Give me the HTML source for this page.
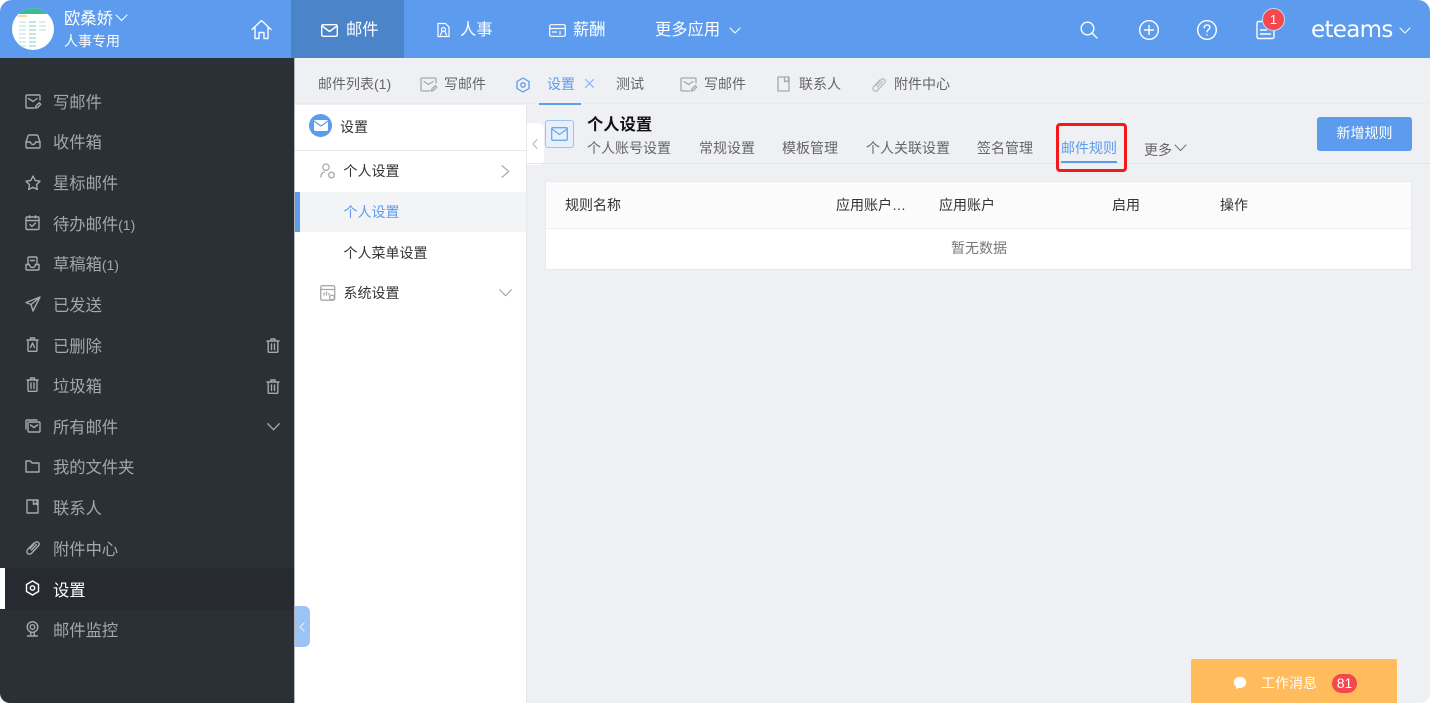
<!DOCTYPE html>
<html lang="zh"><head><meta charset="utf-8"><title>设置</title>
<style>
*{box-sizing:border-box}
html,body{margin:0;padding:0;width:1430px;height:703px;overflow:hidden;background:#fff}
body{position:relative;font-family:"Liberation Sans","Noto Sans CJK SC",sans-serif;font-size:14px;color:#333}
#r{position:absolute;left:0;top:0;width:1430px;height:703px;filter:blur(.3px)}
.a{position:absolute}
.t{position:absolute;white-space:nowrap;line-height:20px;height:20px}
svg{position:absolute;overflow:visible;fill:none;stroke-linecap:round;stroke-linejoin:round}
.side{font-size:16.3px;color:#a3a7ad;left:53px}
.side small{font-size:14px}
.sic{stroke:#a6a9ae;stroke-width:1.4}
.nav{font-size:16.3px;color:#fff}
.w{stroke:#fff;stroke-width:1.4}
.tab{color:#666}
.gi{stroke:#a8a8a8;stroke-width:1.3}
.sub{color:#666}
.th{color:#333}
</style></head><body><div id="r">

<!-- page backgrounds -->
<div class="a" style="left:295px;top:58px;width:1135px;height:645px;background:#eff0f4;border-radius:0 0 10px 0"></div>

<!-- top bar -->
<div class="a" style="left:0;top:0;width:1430px;height:58px;background:#5c9bed;border-radius:12px 12px 0 0"></div>
<div class="a" style="left:291px;top:0;width:113px;height:58px;background:#4c84c9"></div>

<!-- avatar -->
<div class="a" style="left:12px;top:8px;width:42px;height:42px;border-radius:50%;background:#fff;overflow:hidden">
 <div class="a" style="left:0;top:0;width:42px;height:6px;background:#3fbb94"></div>
 <div class="a" style="left:6px;top:7px;width:9px;height:2px;background:#f5d9a0"></div>
 <div class="a" style="left:7px;top:13px;width:7px;height:26px;background:repeating-linear-gradient(#d8f2e9 0 2px,#fff 2px 4px)"></div>
 <div class="a" style="left:17px;top:13px;width:7px;height:26px;background:repeating-linear-gradient(#bfe9da 0 2px,#fff 2px 4px)"></div>
 <div class="a" style="left:27px;top:13px;width:7px;height:12px;background:repeating-linear-gradient(#d8f2e9 0 2px,#fff 2px 4px)"></div>
</div>
<div class="t" style="left:64px;top:9px;font-size:16.3px;color:#fff">欧桑娇</div>
<svg class="w" style="left:115px;top:14px" width="13" height="8" stroke-width="1.1" viewBox="0 0 13 8"><path d="M1 1l5.500 5.500L12 1" stroke-width="1.100"/></svg>
<div class="t" style="left:64px;top:31px;color:#fff">人事专用</div>
<svg class="w" style="left:251px;top:19px" width="21" height="21" viewBox="0 0 21 21"><path d="M1 10.500 10.500 1.500 20 10.500M4 8.500V19.500H8V13.500H13V19.500H17V8.500"/></svg>

<!-- nav -->
<svg class="w" style="left:321px;top:24px" width="17" height="13" viewBox="0 0 17 13"><rect x=".7" y=".7" width="15.600" height="11.600" rx="1.500"/><path d="M1 2l7.500 5.500L16 2"/></svg>
<div class="t nav" style="left:346px;top:20px">邮件</div>
<svg class="w" style="left:437px;top:22px" width="13" height="16" viewBox="0 0 13 16"><path d="M1 1.500h7.500L12 5v9.500H1z" stroke-width="1.200"/><circle cx="6.500" cy="7.500" r="2" stroke-width="1.200"/><path d="M3.500 13l1.500-3.500M9.500 13 8 9.500" stroke-width="1.200"/></svg>
<div class="t nav" style="left:460px;top:20px">人事</div>
<svg class="w" style="left:549px;top:24px" width="17" height="13" viewBox="0 0 17 13"><rect x=".7" y=".7" width="15.600" height="11.600" rx="1.500" stroke-width="1.200"/><path d="M1 4.500h15M3.500 8h4M11 7.500v2.500" stroke-width="1.200"/></svg>
<div class="t nav" style="left:573px;top:20px">薪酬</div>
<div class="t nav" style="left:655px;top:20px">更多应用</div>
<svg class="w" style="left:729px;top:27px" width="12" height="7" viewBox="0 0 12 7"><path d="M1 1l5 5 5-5" stroke-width="1.100"/></svg>

<!-- right icons -->
<svg class="w" style="left:1080px;top:21px" width="18" height="18" viewBox="0 0 18 18"><circle cx="7.500" cy="7.500" r="6.300"/><path d="M12 12l5 5"/></svg>
<svg class="w" style="left:1139px;top:20px" width="20" height="20" viewBox="0 0 20 20"><circle cx="10" cy="10" r="9.300"/><path d="M10 5.500v9M5.500 10h9"/></svg>
<svg class="w" style="left:1197px;top:20px" width="20" height="20" viewBox="0 0 20 20"><circle cx="10" cy="10" r="9.300"/><path d="M7.300 7.800c0-1.800 1.200-2.900 2.800-2.900s2.800 1 2.800 2.500c0 2.200-2.900 2.300-2.900 4.500"/><path d="M10 14.800v.2"/></svg>
<svg class="w" style="left:1256px;top:20px" width="19" height="20" viewBox="0 0 19 20"><path d="M7 1.500H2.500a1.500 1.500 0 0 0-1.500 1.500v14a1.500 1.500 0 0 0 1.500 1.500h14a1.500 1.500 0 0 0 1.500-1.500V9"/><path d="M4.500 10h6M4.500 14h10"/></svg>
<div class="a" style="left:1262px;top:8px;width:23px;height:23px;border-radius:50%;background:#f4474e;border:1px solid #c5d8f2;color:#fff;font-size:13px;line-height:21px;text-align:center">1</div>
<div class="t" style="left:1311px;top:17px;height:26px;line-height:26px;font-size:23px;color:#fff;font-family:'DejaVu Sans','Liberation Sans',sans-serif;letter-spacing:-.7px">eteams</div>
<svg class="w" style="left:1399px;top:27px" width="12" height="7" viewBox="0 0 12 7"><path d="M1 1l5 5 5-5" stroke-width="1.100"/></svg>

<!-- sidebar -->
<div class="a" style="left:0;top:58px;width:295px;height:645px;background:#2b2f36;border-radius:0 0 0 10px;border-right:1px solid #b4b5b8"></div>
<div class="a" style="left:0;top:568px;width:294px;height:42px;background:#272a30"></div>
<div class="a" style="left:0;top:568px;width:5px;height:41px;background:#fff"></div>

<svg class="sic" style="left:25px;top:94px" width="16" height="15" viewBox="0 0 16 15"><path d="M15 6V2a1 1 0 0 0-1-1H2a1 1 0 0 0-1 1v11a1 1 0 0 0 1 1h7"/><path d="M3.500 4.500l4.500 3 4-3M10.500 14l.4-2 3.300-3.300 1.600 1.600-3.300 3.300z"/></svg>
<div class="t side" style="top:93px">写邮件</div>
<svg class="sic" style="left:25px;top:134px" width="16" height="15" viewBox="0 0 16 15"><path d="M1 8 3 2a1.500 1.500 0 0 1 1.500-1h7A1.500 1.500 0 0 1 13 2l2 6v5a1 1 0 0 1-1 1H2a1 1 0 0 1-1-1z"/><path d="M1 8h4.500a2.500 2.500 0 0 0 5 0H15"/></svg>
<div class="t side" style="top:133px">收件箱</div>
<svg class="sic" style="left:25px;top:175px" width="16" height="15" viewBox="0 0 16 15"><path d="M8 1l2.200 4.500 4.800.7-3.500 3.400.8 4.900L8 12.200l-4.300 2.300.8-4.900L1 6.200l4.800-.7z"/></svg>
<div class="t side" style="top:174px">星标邮件</div>
<svg class="sic" style="left:25px;top:215px" width="15" height="15" viewBox="0 0 15 15"><rect x="1" y="2" width="13" height="12.500" rx="1"/><path d="M1 5.500h13M4.500.8v2M10.500.8v2M5 9.500l2 2 3.500-3.500"/></svg>
<div class="t side" style="top:215px">待办邮件<small>(1)</small></div>
<svg class="sic" style="left:25px;top:256px" width="15" height="15" viewBox="0 0 15 15"><path d="M3 8V2a1 1 0 0 1 1-1h7a1 1 0 0 1 1 1v6M1 8.500h3.500a3 3 0 0 0 6 0H14V13a1 1 0 0 1-1 1H2a1 1 0 0 1-1-1zM5.500 4.500h4"/></svg>
<div class="t side" style="top:255px">草稿箱<small>(1)</small></div>
<svg class="sic" style="left:25px;top:296px" width="16" height="16" viewBox="0 0 16 16"><path d="M15 1 1 6.500l5 2L8 15zM15 1 6 8.500"/></svg>
<div class="t side" style="top:296px">已发送</div>
<svg class="sic" style="left:26px;top:337px" width="13" height="15" viewBox="0 0 13 15"><path d="M1 3h11M4.500 3V1h4v2M2 3v10.500a.8.8 0 0 0 .8.800h7.400a.8.8 0 0 0 .8-.8V3M4.500 10.500 6.500 6l2 4.500"/></svg>
<div class="t side" style="top:337px">已删除</div>
<svg class="sic" style="left:266px;top:338px" width="14" height="15" viewBox="0 0 14 15"><path d="M1 3h12M5 3V1h4v2M2.200 3v10.500a.8.8 0 0 0 .8.800h8a.8.8 0 0 0 .8-.8V3M5.500 6v5.500M8.500 6v5.500"/></svg>
<svg class="sic" style="left:26px;top:377px" width="13" height="15" viewBox="0 0 13 15"><path d="M1 3h11M4.500 3V1h4v2M2 3v10.500a.8.8 0 0 0 .8.800h7.400a.8.8 0 0 0 .8-.8V3M5 6v5.500M8 6v5.500"/></svg>
<div class="t side" style="top:377px">垃圾箱</div>
<svg class="sic" style="left:266px;top:379px" width="14" height="15" viewBox="0 0 14 15"><path d="M1 3h12M5 3V1h4v2M2.200 3v10.500a.8.8 0 0 0 .8.800h8a.8.8 0 0 0 .8-.8V3M5.500 6v5.500M8.500 6v5.500"/></svg>
<svg class="sic" style="left:25px;top:419px" width="16" height="14" viewBox="0 0 16 14"><path d="M1 10V2a1 1 0 0 1 1-1h10"/><rect x="3" y="3" width="12" height="10" rx="1"/><path d="M5.500 6l3.500 2.500L12.500 6"/></svg>
<div class="t side" style="top:418px">所有邮件</div>
<svg class="sic" style="left:267px;top:423px" width="13" height="8" viewBox="0 0 13 8"><path d="M.7.700l5.800 6 5.800-6"/></svg>
<svg class="sic" style="left:25px;top:460px" width="15" height="13" viewBox="0 0 15 13"><path d="M1 1h4.500l1.500 2h7v9H1z"/></svg>
<div class="t side" style="top:458px">我的文件夹</div>
<svg class="sic" style="left:26px;top:499px" width="13" height="15" viewBox="0 0 13 15"><path d="M1 1h11v13H1zM7.500 1v4.500l2-1 1.500 1V1"/></svg>
<div class="t side" style="top:499px">联系人</div>
<svg class="sic" style="left:26px;top:540px" width="14" height="15" viewBox="0 0 14 15"><path d="M4 8.500 9 2.800c1-1.200 2.500-1.300 3.500-.3s.8 2.400-.2 3.500l-6.500 7c-1.300 1.400-3 1.500-4.200.4-1-1-1-2.700.2-4L8 3M5.500 10 10.500 4.500"/></svg>
<div class="t side" style="top:540px">附件中心</div>
<svg style="left:25px;top:580px;stroke:#fff;stroke-width:1.400" width="15" height="16" viewBox="0 0 15 16"><path d="M7.500 1l6 3.500v7l-6 3.500-6-3.500v-7z"/><circle cx="7.500" cy="8" r="2.200"/></svg>
<div class="t side" style="top:581px;color:#fff">设置</div>
<svg class="sic" style="left:26px;top:621px" width="13" height="16" viewBox="0 0 13 16"><circle cx="6.500" cy="6" r="5.300"/><circle cx="6.500" cy="6" r="2.300"/><path d="M5 11.500l-.5 3M8 11.500l.5 3M1.500 15h10"/></svg>
<div class="t side" style="top:621px">邮件监控</div>

<!-- settings column -->
<div class="a" style="left:295px;top:105px;width:232px;height:598px;background:#fff;border-right:1px solid #e6e7ea"></div>
<div class="a" style="left:295px;top:150px;width:231px;height:1px;background:#e8e9ec"></div>
<div class="a" style="left:295px;top:192px;width:231px;height:40px;background:#f3f4f6"></div>
<div class="a" style="left:295px;top:192px;width:5px;height:40px;background:#5c9bed"></div>
<div class="a" style="left:295px;top:606px;width:15px;height:41px;background:#9cc3f5;border-radius:0 6px 6px 0"></div>
<svg style="left:299px;top:622px;stroke:#e9f2fd;stroke-width:1.200" width="6" height="10" viewBox="0 0 6 10"><path d="M5 1 1 5l4 4"/></svg>

<div class="a" style="left:309px;top:114px;width:23px;height:23px;border-radius:50%;background:#5c9bed"></div>
<svg style="left:314px;top:120px;stroke:#5c9bed;stroke-width:1.200" width="14" height="11" viewBox="0 0 14 11"><rect width="14" height="11" rx="1.500" fill="#fff" stroke="none"/><path d="M.5 1.500 7 6l6.500-4.500"/></svg>
<div class="t" style="left:340px;top:117px;color:#333">设置</div>

<svg class="gi" style="left:320px;top:163px" width="15" height="16" viewBox="0 0 15 16"><circle cx="6" cy="4.200" r="3.200"/><path d="M.8 14c.3-3 1.500-4.500 3.500-5"/><circle cx="11.500" cy="12" r="2.800"/></svg>
<div class="t" style="left:343.500px;top:161px;color:#333">个人设置</div>
<svg style="left:501px;top:165px;stroke:#a0a0a0;stroke-width:1.100" width="9" height="13" viewBox="0 0 9 13"><path d="M1 .7l6.800 5.800L1 12.300"/></svg>
<div class="t" style="left:343.500px;top:202px;color:#5c9bed">个人设置</div>
<div class="t" style="left:343.500px;top:243px;color:#333">个人菜单设置</div>
<svg class="gi" style="left:320px;top:285px" width="15" height="16" viewBox="0 0 15 16"><rect x=".7" y=".7" width="14" height="14.500" rx="1.500"/><path d="M.7 4.500h14M4 10V8M6.500 10V7M9 10V8.500"/><circle cx="12" cy="12.500" r="2.300" fill="#fff"/></svg>
<div class="t" style="left:343.500px;top:283px;color:#333">系统设置</div>
<svg style="left:499px;top:289px;stroke:#a0a0a0;stroke-width:1.100" width="13" height="8" viewBox="0 0 13 8"><path d="M.7.700l5.800 6 5.800-6"/></svg>

<!-- tab bar -->
<div class="a" style="left:295px;top:58px;width:1135px;height:46px;background:#eff0f4;border-bottom:1px solid #eaebef"></div>
<div class="t tab" style="left:318px;top:74px">邮件列表(1)</div>
<svg class="gi" style="left:420px;top:77px" width="17" height="15" viewBox="0 0 17 15"><path d="M16 6V2a1 1 0 0 0-1-1H2a1 1 0 0 0-1 1v11a1 1 0 0 0 1 1h8"/><path d="M4 4.500l4.500 3 4.500-3M11.500 14l.4-2 3.300-3.300 1.500 1.500-3.300 3.300z"/></svg>
<div class="t tab" style="left:444px;top:74px">写邮件</div>
<svg style="left:516px;top:77px;stroke:#5c9bed;stroke-width:1.300" width="14" height="16" viewBox="0 0 14 16"><path d="M7 1l6 3.500v7L7 15l-6-3.500v-7z"/><circle cx="7" cy="8" r="2.200"/></svg>
<div class="t" style="left:547px;top:74px;color:#5c9bed">设置</div>
<svg style="left:585px;top:79px;stroke:#7fb0ee;stroke-width:1.100" width="9" height="9" viewBox="0 0 9 9"><path d="M.5.500l8 8M8.500.500l-8 8"/></svg>
<div class="a" style="left:539px;top:103px;width:42px;height:2px;background:#5c9bed"></div>
<div class="t tab" style="left:616px;top:74px">测试</div>
<svg class="gi" style="left:680px;top:77px" width="17" height="15" viewBox="0 0 17 15"><path d="M16 6V2a1 1 0 0 0-1-1H2a1 1 0 0 0-1 1v11a1 1 0 0 0 1 1h8"/><path d="M4 4.500l4.500 3 4.500-3M11.500 14l.4-2 3.300-3.300 1.500 1.500-3.300 3.300z"/></svg>
<div class="t tab" style="left:704px;top:74px">写邮件</div>
<svg class="gi" style="left:777px;top:76px" width="13" height="16" viewBox="0 0 13 16"><path d="M1 1h11v14H1zM7.500 1v5l2-1.200L11.500 6V1"/></svg>
<div class="t tab" style="left:799px;top:74px">联系人</div>
<svg style="left:872px;top:77px;stroke:#bbb;stroke-width:1.300" width="14" height="15" viewBox="0 0 14 15"><path d="M4 8.500 9 2.800c1-1.200 2.500-1.300 3.500-.3s.8 2.400-.2 3.500l-6.500 7c-1.300 1.400-3 1.500-4.200.4-1-1-1-2.700.2-4L8 3M5.500 10 10.500 4.500"/></svg>
<div class="t tab" style="left:894px;top:74px">附件中心</div>

<!-- content header -->
<div class="a" style="left:527px;top:123px;width:17px;height:42px;background:#fff;border-radius:0 6px 6px 0"></div>
<svg style="left:532px;top:139px;stroke:#b5b5b5;stroke-width:1.100" width="6" height="10" viewBox="0 0 6 10"><path d="M5 .7.900 5 5 9.300"/></svg>
<div class="a" style="left:527px;top:163px;width:903px;height:1px;background:#e4e5e9"></div>
<div class="a" style="left:545px;top:120px;width:29px;height:28px;background:#e8f0fb;border:1px solid #9cc3f5;border-radius:3px"></div>
<svg style="left:551px;top:127px;stroke:#6fa6ef;stroke-width:1.300" width="17" height="14" viewBox="0 0 17 14"><rect x=".7" y=".7" width="15.600" height="12.600" rx="1"/><path d="M1 2l7.500 5.500L16 2"/></svg>
<div class="t" style="left:587px;top:115px;font-size:16.300px;font-weight:700;color:#111">个人设置</div>
<div class="t sub" style="left:587px;top:138px">个人账号设置</div>
<div class="t sub" style="left:699px;top:138px">常规设置</div>
<div class="t sub" style="left:782px;top:138px">模板管理</div>
<div class="t sub" style="left:866px;top:138px">个人关联设置</div>
<div class="t sub" style="left:977px;top:138px">签名管理</div>
<div class="t" style="left:1061px;top:138px;color:#5c9bed">邮件规则</div>
<div class="a" style="left:1061px;top:161px;width:56px;height:2px;background:#5c9bed"></div>
<div class="a" style="left:1056px;top:123px;width:71px;height:49px;border:3px solid #f5181b;border-radius:4px"></div>
<div class="t sub" style="left:1144px;top:140px">更多</div>
<svg style="left:1174px;top:144px;stroke:#777;stroke-width:1.100" width="13" height="8" viewBox="0 0 13 8"><path d="M1 1l5.500 5.500L12 1"/></svg>
<div class="a" style="left:1317px;top:117px;width:95px;height:34px;background:#5c9bed;border-radius:3px;color:#fff;text-align:center;line-height:33px">新增规则</div>

<!-- table -->
<div class="a" style="left:545px;top:181px;width:867px;height:89px;background:#fff;border:1px solid #e8e9ec"></div>
<div class="a" style="left:546px;top:182px;width:865px;height:47px;background:#fbfbfc;border-bottom:1px solid #eeeff1"></div>
<div class="t th" style="left:565px;top:195px">规则名称</div>
<div class="t th" style="left:836px;top:195px">应用账户…</div>
<div class="t th" style="left:939px;top:195px">应用账户</div>
<div class="t th" style="left:1112px;top:195px">启用</div>
<div class="t th" style="left:1220px;top:195px">操作</div>
<div class="t" style="left:951px;top:238px;color:#777">暂无数据</div>

<!-- message pill -->
<div class="a" style="left:1191px;top:659px;width:206px;height:44px;background:#ffbb5c;border-radius:2px 2px 0 0"></div>
<svg style="left:1233px;top:676px" width="14" height="14" viewBox="0 0 14 14"><path fill="#fff" d="M7 .8c3.500 0 6.200 2.500 6.200 5.600S10.500 12 7 12c-.6 0-1 0-1.500-.1L2.800 13.300l.3-2.600C1.700 9.700.8 8.200.8 6.400.8 3.300 3.500.8 7 .8z"/></svg>
<div class="t" style="left:1261px;top:673px;color:#fff">工作消息</div>
<div class="a" style="left:1332px;top:674px;width:25px;height:19px;background:#f4474e;border-radius:10px;color:#fff;text-align:center;line-height:19px;font-size:14px">81</div>

</div></body></html>
